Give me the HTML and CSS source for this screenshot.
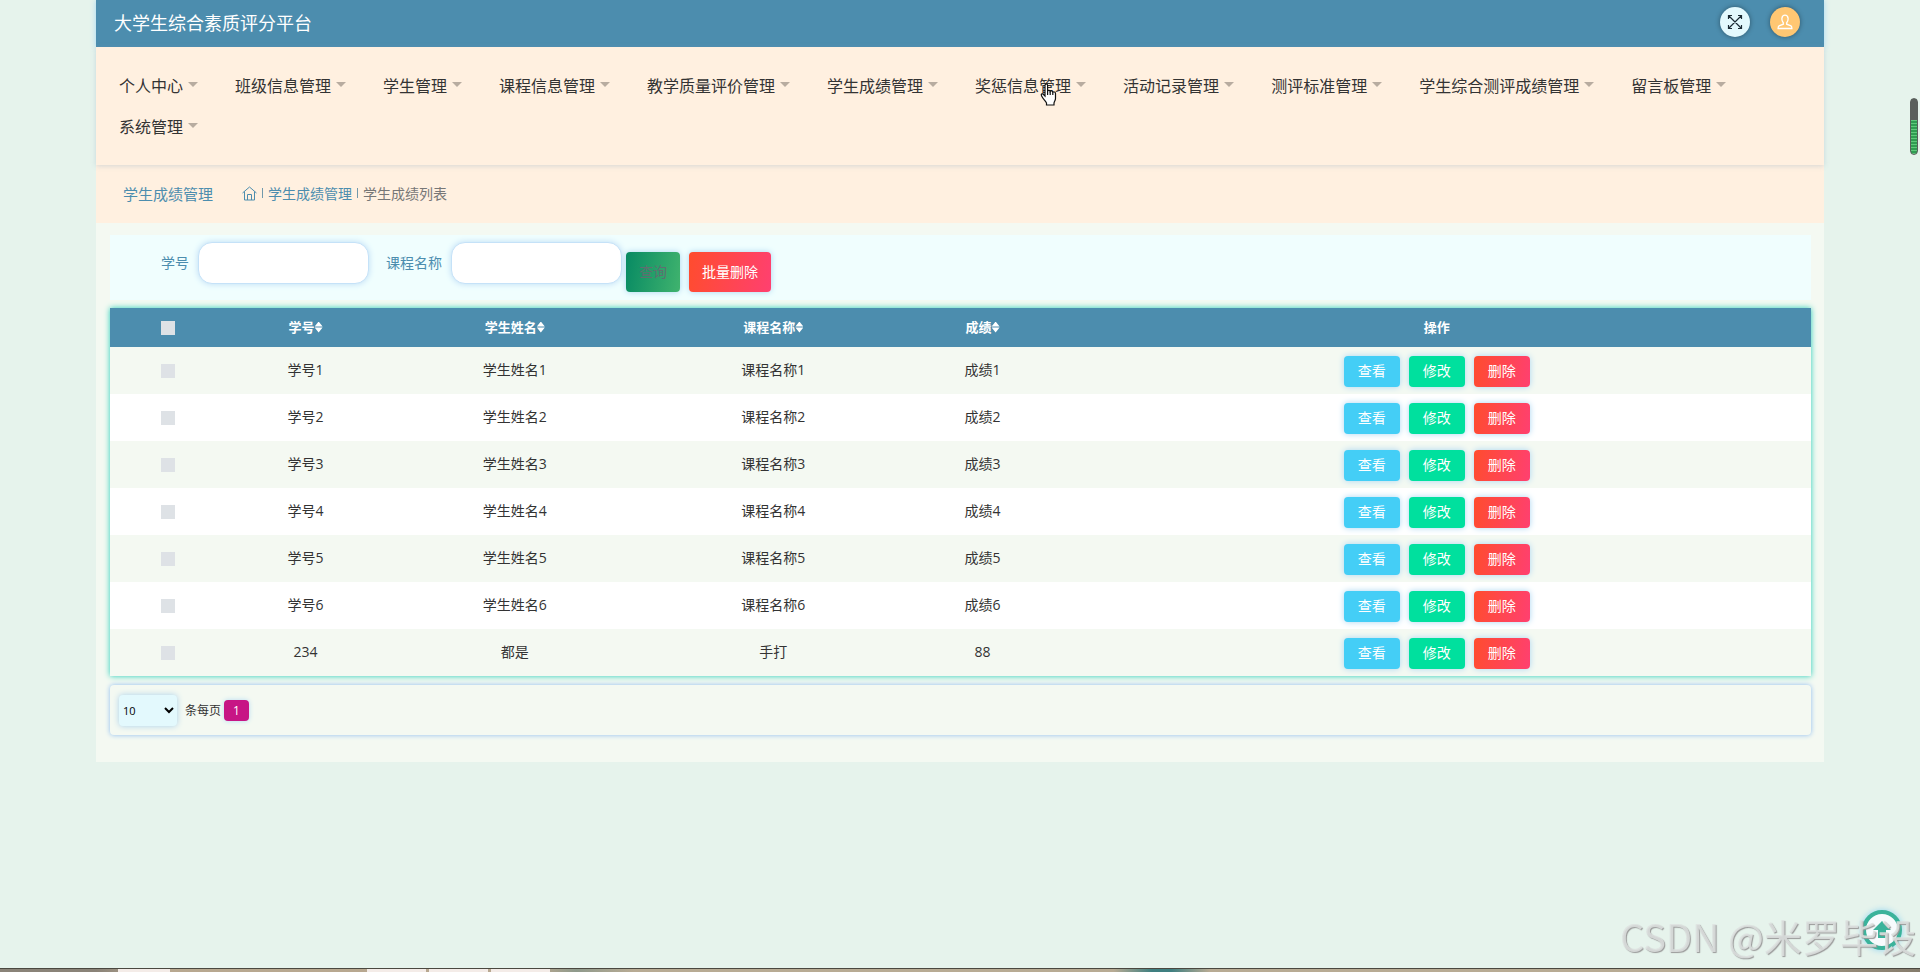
FILE: index.html
```html
<!DOCTYPE html>
<html lang="zh-CN">

<head>
    <meta charset="UTF-8">
    <meta name="viewport" content="width=device-width, initial-scale=1.0">
    <title>学生成绩列表</title>
    <link rel="stylesheet" href="styles.css">
</head>

<body>
    <div class="wrapper">
        <header class="top-bar">
            <h1>大学生综合素质评分平台</h1>
            <div class="top-actions">
                <button type="button" class="round-btn" aria-label="全屏">
                    <svg width="16" height="16" viewBox="0 0 16 16" fill="none" stroke="#1b2a33" stroke-width="1.2">
                        <path d="M2 2l12 12M14 2L2 14M1.500 5v-3.500h3.500M11 1.500h3.500v3.500M14.500 11v3.500h-3.500M5 14.500h-3.500v-3.500" />
                    </svg>
                </button>
                <button type="button" class="round-btn user-btn" aria-label="用户">
                    <svg width="16" height="16" viewBox="0 0 16 16" fill="none" stroke="#fff" stroke-width="1.3">
                        <path d="M6.300 8.800C4.200 6.500 4.200 1.200 8 1.200s3.800 5.300 1.700 7.600v1.400l4.300 1.600c.6.300.9 1 .9 2.700H1.100c0-1.700.3-2.400.9-2.700l4.300-1.600z" />
                    </svg>
                </button>
            </div>
        </header>

        <nav class="menu">
            <a href="#">个人中心</a>
            <a href="#">班级信息管理</a>
            <a href="#">学生管理</a>
            <a href="#">课程信息管理</a>
            <a href="#">教学质量评价管理</a>
            <a href="#">学生成绩管理</a>
            <a href="#">奖惩信息管理</a>
            <a href="#">活动记录管理</a>
            <a href="#">测评标准管理</a>
            <a href="#">学生综合测评成绩管理</a>
            <a href="#">留言板管理</a>
            <a href="#">系统管理</a>
        </nav>

        <div class="breadcrumb">
            <h2>学生成绩管理</h2>
            <a href="#" aria-label="首页">
                <svg width="15" height="15" viewBox="0 0 15 15" fill="none" stroke="currentColor">
                    <path d="M.500 7L7.500 1l7 6M2.500 5.500v8.500h10V5.500M5.500 14V8.500h4V14" />
                </svg>
            </a>
            <span class="sep"></span>
            <a href="#">学生成绩管理</a>
            <span class="sep"></span>
            <span class="current">学生成绩列表</span>
        </div>

        <main class="content">
            <form class="search">
                <label for="xuehao">学号</label>
                <input type="text" id="xuehao">
                <label for="kecheng">课程名称</label>
                <input type="text" id="kecheng">
                <button type="button" class="btn query">查询</button>
                <button type="button" class="btn delete">批量删除</button>
            </form>

            <table class="list">
                <colgroup>
                    <col class="col-check">
                    <col class="col-short">
                    <col class="col-long">
                    <col class="col-long">
                    <col class="col-short">
                    <col>
                </colgroup>
                <thead>
                    <tr>
                        <th><input type="checkbox" aria-label="全选"></th>
                        <th>学号<i class="sort"></i></th>
                        <th>学生姓名<i class="sort"></i></th>
                        <th>课程名称<i class="sort"></i></th>
                        <th>成绩<i class="sort"></i></th>
                        <th>操作</th>
                    </tr>
                </thead>
                <tbody id="rows"></tbody>
            </table>

            <div class="pager">
                <select id="page-size">
                    <option>10</option>
                    <option>25</option>
                    <option>50</option>
                </select>
                <label for="page-size">条每页</label>
                <button type="button" class="page">1</button>
            </div>
        </main>
    </div>

    <div class="scroll-thumb"></div>
    <button type="button" class="to-top" aria-label="返回顶部">
        <svg width="18" height="18" viewBox="0 0 18 18" fill="#3bb39b">
            <path d="M9 0l9 9h-5v8H5V9H0z" />
        </svg>
    </button>
    <div class="watermark">CSDN @米罗毕设</div>
    <div class="taskbar">
        <span class="task"></span>
        <span class="task"></span>
        <span class="task"></span>
        <span class="task"></span>
    </div>
    <svg class="cursor" width="17" height="23" viewBox="0 0 17 23" fill="#fff" stroke="#111" stroke-width="1.2">
        <path d="M5 13V2.500c0-2 2.600-2 2.600 0V8c.6-1 2.500-.8 2.600.5.7-.9 2.500-.6 2.600.7.8-.7 2.700-.3 2.700 1.300v5c0 2-1.300 3-1.500 4.500v2H6.500v-2C5 17.500 3 16 1.500 12.800.6 10.800 2.600 10.200 3.500 11.500z" />
        <path d="M7.600 8v4M10.200 8.500V12M12.800 9.500V12" />
    </svg>

    <script>
        const rows = [
            ['学号1', '学生姓名1', '课程名称1', '成绩1'],
            ['学号2', '学生姓名2', '课程名称2', '成绩2'],
            ['学号3', '学生姓名3', '课程名称3', '成绩3'],
            ['学号4', '学生姓名4', '课程名称4', '成绩4'],
            ['学号5', '学生姓名5', '课程名称5', '成绩5'],
            ['学号6', '学生姓名6', '课程名称6', '成绩6'],
            ['234', '都是', '手打', '88']
        ];

        // 渲染成绩列表
        document.getElementById('rows').innerHTML = rows.map(row => `
            <tr>
                <td><input type="checkbox" aria-label="选择${row[0]}"></td>
                ${row.map(cell => `<td>${cell}</td>`).join('')}
                <td>
                    <div class="ops">
                        <button type="button" class="btn view">查看</button>
                        <button type="button" class="btn edit">修改</button>
                        <button type="button" class="btn delete">删除</button>
                    </div>
                </td>
            </tr>`).join('');
    </script>
</body>

</html>
```
FILE: styles.css
```css
* {
    box-sizing: border-box;
}

body {
    margin: 0;
    min-height: 100vh;
    font-family: "Open Sans", "Noto Sans CJK SC", sans-serif;
    font-size: 14px;
    color: #333;
    background: #e6f3ec;
}

a {
    color: inherit;
    text-decoration: none;
}

button,
input,
select {
    font: inherit;
}

.wrapper {
    width: 90%;
    margin: 0 auto;
    background: #f4f9f2;
}

/* 顶部 */
.top-bar {
    display: flex;
    justify-content: space-between;
    align-items: center;
    height: 47px;
    padding: 0 24px 3px 18px;
    background: #4c8dae;
    box-shadow: 0 0 6px #a5d8f5;
}

.top-bar h1 {
    margin: 0;
    font-size: 18px;
    font-weight: 400;
    color: #fff;
}

.top-actions {
    display: flex;
    gap: 20px;
}

.round-btn {
    display: flex;
    justify-content: center;
    align-items: center;
    width: 30px;
    height: 30px;
    padding: 0;
    border: none;
    border-radius: 50%;
    background: #e3f9fd;
    box-shadow: 0 0 5px rgba(0, 0, 0, 0.4);
}

.user-btn {
    background: #ffc773;
}

/* 菜单 */
.menu {
    position: relative;
    display: flex;
    flex-wrap: wrap;
    padding: 17px 4px 19px;
    background: #fff0e0;
    box-shadow: 0 1px 5px rgba(120, 160, 190, 0.3);
}

.menu a {
    display: flex;
    align-items: center;
    gap: 5px;
    height: 41px;
    padding: 0 19px;
    font-size: 16px;
}

.menu a::after {
    content: "";
    border: 5px solid transparent;
    border-top-color: #b8aca0;
    border-bottom: 0;
    margin-right: -1px;
}

/* 面包屑 */
.breadcrumb {
    display: flex;
    align-items: center;
    height: 58px;
    padding: 0 27px 2px;
    background: #fff0e0;
    color: #4c8dae;
}

.breadcrumb h2 {
    margin: 0 29px 0 0;
    font-size: 15px;
    font-weight: 400;
}

.breadcrumb svg {
    display: block;
}

.sep {
    width: 1px;
    height: 10px;
    margin: 0 5px;
    background: #7199ac;
}

.current {
    color: #777;
}

/* 内容 */
.content {
    padding: 12px 13px 27px 14px;
}

.search {
    display: flex;
    align-items: flex-start;
    height: 65px;
    margin-bottom: 8px;
    padding: 7px 51px;
    background: #f0fefe;
}

.search label {
    line-height: 41px;
    color: #4c8dae;
}

.search input {
    width: 171px;
    height: 42px;
    margin: 0 17px 0 9px;
    padding: 0 12px;
    border: 1px solid #c5e2f8;
    border-radius: 14px;
    background: #fff;
    box-shadow: 0 0 6px #bcdcf6;
}

.search input:last-of-type {
    margin-right: 4px;
}

.search .btn {
    height: 40px;
    margin: 10px 9px 0 0;
}

.btn {
    height: 31px;
    padding: 0 13px 3px;
    border: none;
    border-radius: 4px;
    color: #fff;
    box-shadow: 0 0 6px #a9d6f2;
}

.query {
    color: #5d7070;
    background: linear-gradient(100deg, #078a63, #40b36e);
}

.view {
    background: #44cef6;
}

.edit {
    background: #00e09e;
}

.delete {
    background: linear-gradient(100deg, #ff4c2e, #ff4070);
}

/* 列表 */
.list {
    width: 100%;
    table-layout: fixed;
    border-collapse: collapse;
    text-align: center;
    background: #fff;
    box-shadow: 0 0 6px #20cdb8;
}

.col-check {
    width: 6.8%;
}

.col-short {
    width: 9.4%;
}

.col-long {
    width: 15.2%;
}

.list th {
    height: 39px;
    padding: 0 0 3px;
    font-size: 13px;
    font-weight: 700;
    color: #fff;
    background: #4c8dae;
}

.list td {
    height: 47px;
    padding: 0 0 3px;
}

.list tbody tr:nth-child(odd) {
    background: #f4f9f2;
}

.list input {
    display: block;
    appearance: none;
    width: 14px;
    height: 14px;
    margin: 3px auto 0;
    background: #dee2e6;
}

.sort {
    display: inline-block;
    width: 8px;
    height: 11px;
    vertical-align: -1px;
    background: #fff;
    clip-path: polygon(50% 0, 100% 45%, 0 45%, 0 55%, 100% 55%, 50% 100%, 0 55%, 0 45%);
}

.ops {
    display: flex;
    justify-content: center;
    gap: 9px;
    margin-top: 5px;
}

.ops .btn {
    width: 56px;
}

/* 分页 */
.pager {
    display: flex;
    align-items: center;
    height: 50px;
    margin-top: 9px;
    padding: 0 9px;
    border-radius: 4px;
    font-size: 12px;
    box-shadow: 0 0 5px #8cbcf0;
}

.pager select {
    width: 58px;
    height: 31px;
    margin-right: 8px;
    padding: 0;
    border: none;
    border-radius: 4px;
    font-size: 11px;
    background: #e3f9fd;
    box-shadow: 0 0 6px #a9d0ea;
}

.page {
    width: 25px;
    height: 21px;
    margin-left: 3px;
    padding: 0;
    border: none;
    border-radius: 4px;
    color: #fff;
    background: #c71585;
    box-shadow: 0 0 5px #b5dcf2;
}

/* 悬浮元素 */
.scroll-thumb {
    position: fixed;
    top: 98px;
    right: 2px;
    width: 8px;
    height: 57px;
    border: 1px solid #5a5f5c;
    border-radius: 4px;
    background: linear-gradient(#5a5f5c 21px, transparent 21px), repeating-linear-gradient(#5fc97c 0 1px, #2f9d52 1px 3px);
}

.to-top {
    position: fixed;
    right: 18px;
    bottom: 22px;
    display: flex;
    justify-content: center;
    align-items: center;
    width: 40px;
    height: 40px;
    padding: 0;
    border: 4px solid #3bb39b;
    border-radius: 50%;
    background: #f7fbfd;
    box-shadow: 0 0 6px #8fd3f0;
}

.watermark {
    position: fixed;
    right: 4px;
    bottom: 16px;
    font-family: "Noto Sans CJK SC", sans-serif;
    font-size: 38px;
    font-weight: 400;
    line-height: 40px;
    color: rgba(222, 226, 224, 0.85);
    text-shadow: 1px 1px 1px #999;
}

/* 底部任务栏 */
.taskbar {
    position: fixed;
    left: 0;
    right: 0;
    bottom: 0;
    display: flex;
    gap: 3px;
    height: 4px;
    padding-left: 367px;
    border-top: 1px solid #4a4840;
    background: linear-gradient(90deg, #8a8378 0 5%, #b8a890 8% 28%, #8f9a8c 30%, #b8ab94 33% 58%, #3f7f80 60% 61%, #b8ab94 63% 88%, #857c6c);
}

.task {
    width: 59px;
    background: #f4ece8;
}

.task:first-child {
    width: 52px;
    margin: 0 194px 0 -249px;
}

.cursor {
    position: fixed;
    top: 83px;
    left: 1040px;
}
```
